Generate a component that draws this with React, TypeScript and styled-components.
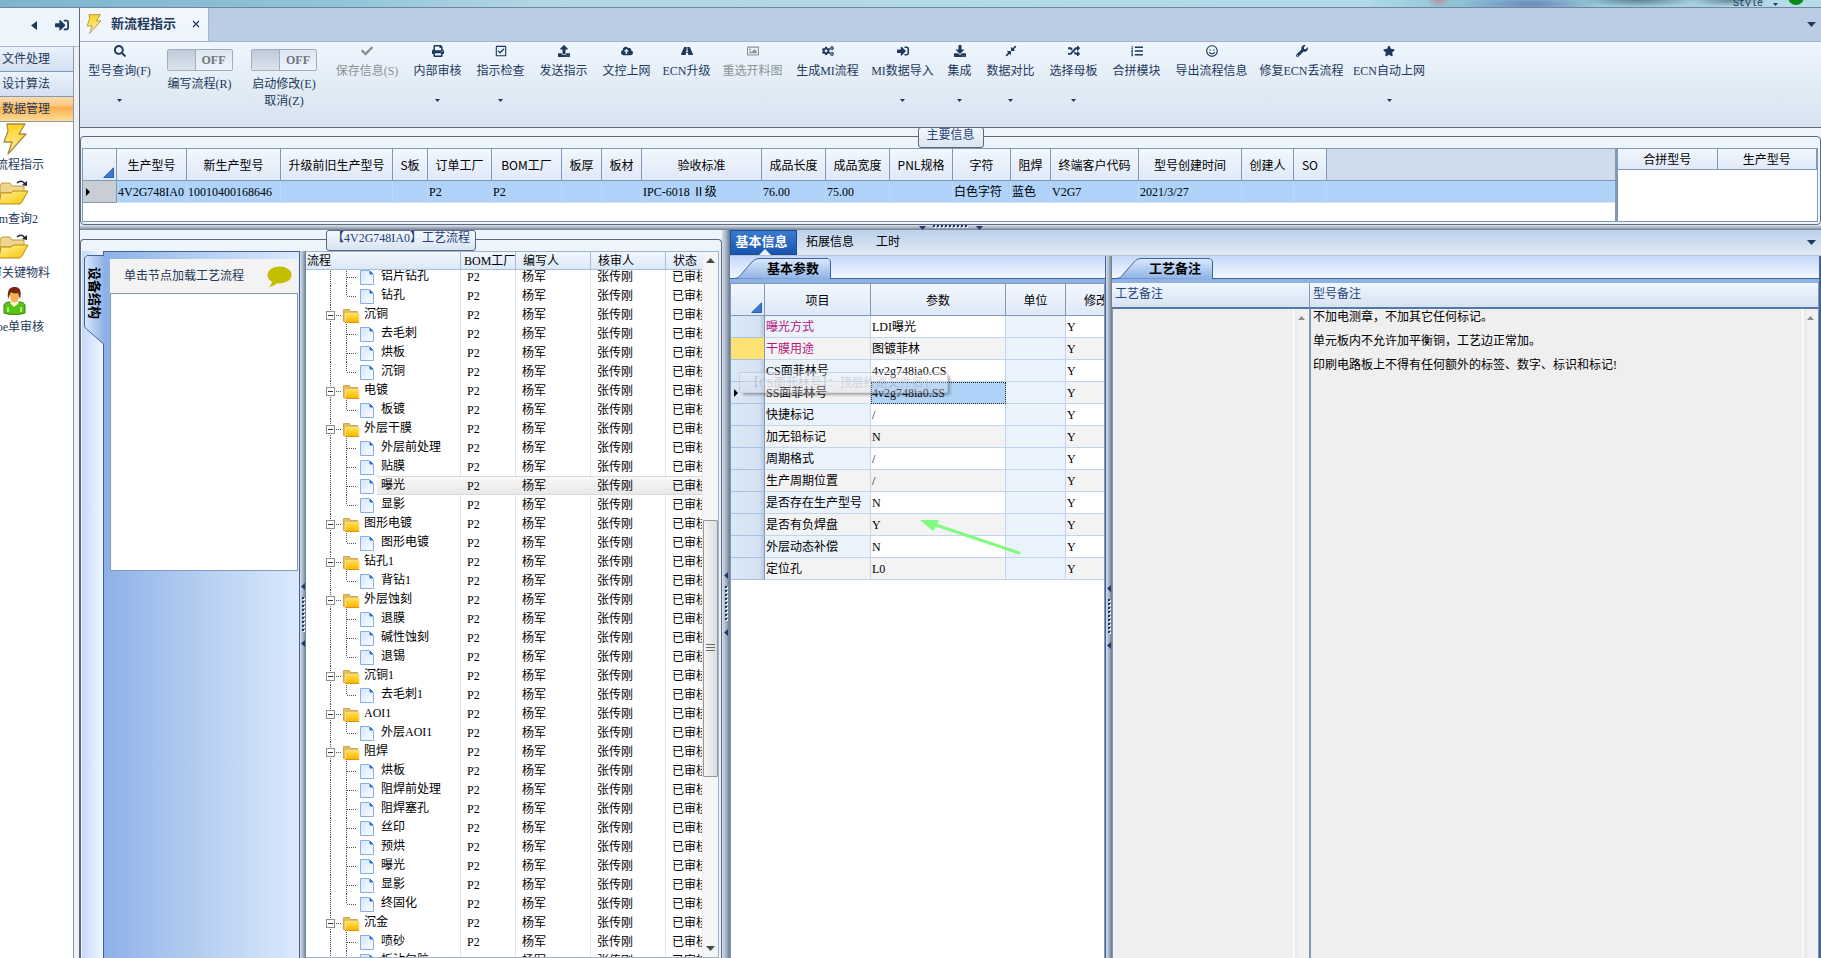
import React from "react";
import styled, { createGlobalStyle, css } from "styled-components";
import {
  FaSearch,
  FaCheck,
  FaPrint,
  FaRegCheckSquare,
  FaUpload,
  FaCloudUploadAlt,
  FaRoad,
  FaRegImage,
  FaCogs,
  FaSignInAlt,
  FaDownload,
  FaCompressAlt,
  FaRandom,
  FaListOl,
  FaRegSmile,
  FaWrench,
  FaStar,
} from "react-icons/fa";

const song = `"Liberation Serif", "Noto Sans CJK SC", serif`;
const hei = `"Noto Sans CJK SC", "Noto Sans", sans-serif`;

const ink = "#1e395b";
const line = "#8099b8";
const frame = "#5a6a80";
const blueLine = "#3f649c";

const GlobalStyle = createGlobalStyle`
  *, *::before, *::after { box-sizing: border-box; }
  body { margin: 0; background: #edf4fc; font: 12px/16px ${song}; color: #000; overflow: hidden; }
  button { font: inherit; color: inherit; border: 0; padding: 0; margin: 0; background: none; cursor: pointer; }
  table { border-collapse: separate; border-spacing: 0; table-layout: fixed; }
  th, td { padding: 0; font-weight: normal; text-align: left; white-space: nowrap; overflow: hidden; }
`;

/* ---------- shell ---------- */

const Shell = styled.div`
  display: flex;
  flex-direction: column;
  height: 100vh;
  overflow: hidden;
`;

const TitleStrip = styled.header`
  flex: none;
  display: flex;
  justify-content: flex-end;
  gap: 10px;
  height: 8px;
  padding-right: 17px;
  overflow: hidden;
  color: ${ink};
  background:
    radial-gradient(ellipse 12px 8px at 79% 0, #c9707e99, transparent),
    radial-gradient(ellipse 70px 9px at 84% 4px, #4d5fa899, transparent),
    radial-gradient(ellipse 60px 7px at 90% 0, #2f4f6699, transparent),
    radial-gradient(ellipse 40px 7px at 95% 0, #2f4f6699, transparent),
    linear-gradient(90deg, #7fb4cf 0, #8fc3d9 18%, #b3d7e4 30%, #b0dbe8 75%, #8dc2d4 80%, #a6d2e0 94%, #b5dbe9 95%);
  border-bottom: 1px solid #6d879e;
`;

const StyleButton = styled.button`
  display: flex;
  align-items: center;
  gap: 10px;
  height: 8px;
  font: 10px/8px "Liberation Mono", monospace;
`;

const GreenDot = styled.span`
  width: 16px;
  height: 16px;
  margin-top: -11px;
  border-radius: 50%;
  background: #0b8a1c;
`;

const Workspace = styled.div`
  flex: 1;
  display: flex;
  min-height: 0;
`;

/* ---------- sidebar ---------- */

const Sidebar = styled.aside`
  flex: none;
  width: 79px;
  display: flex;
  flex-direction: column;
  overflow: hidden;
  background: #f0f0f0;
`;

const SidebarHead = styled.div`
  height: 39px;
  flex: none;
  display: flex;
  align-items: center;
  justify-content: flex-end;
  gap: 18px;
  padding: 0 10px 4px 0;
  color: ${ink};
  background: #edf4fc;
  border-bottom: 1px solid #a9b8cc;
  button { display: flex; }
`;

const NavList = styled.nav`
  flex: 1;
  width: 74px;
  background: #fff;
  border-right: 1px solid #8b9bb0;
`;

const NavButton = styled.button<{ $active?: boolean }>`
  display: block;
  width: 100%;
  height: 25px;
  padding-left: 2px;
  text-align: left;
  color: ${ink};
  border-bottom: 1px solid ${line};
  background: ${(p) =>
    p.$active
      ? "linear-gradient(180deg, #fcdcaa 0, #fbc67c 38%, #faae4d 42%, #fedd93 100%)"
      : "linear-gradient(180deg, #eaf2fc, #d3e0f0)"};
`;

const NavItem = styled.button<{ $end: number }>`
  display: flex;
  flex-direction: column;
  height: 54px;
  width: ${(p) => p.$end}px;
  align-items: flex-end;
  color: ${ink};
  white-space: nowrap;
`;

const NavIcon = styled.span`
  display: flex;
  align-items: center;
  width: 100%;
  height: 33px;
`;

const NavLabel = styled.span`
  line-height: 20px;
`;

/* ---------- document area ---------- */

const Main = styled.main`
  flex: 1;
  min-width: 0;
  display: flex;
  flex-direction: column;
  border-left: 1px solid ${frame};
  background: #edf4fc;
`;

const TabBar = styled.div`
  flex: none;
  display: flex;
  justify-content: space-between;
  height: 33px;
  padding-right: 5px;
  background: linear-gradient(180deg, #bccbe5, #bbcde6);
`;

const DocTab = styled.div`
  display: flex;
  align-items: center;
  width: 129px;
  padding: 0 8px 2px 6px;
  color: ${ink};
  background: linear-gradient(180deg, #f4f8fd, #edf4fc);
  border-right: 1px solid #a3b3cb;
  strong { flex: 1; font-size: 13px; margin-left: 9px; }
`;

const IconButton = styled.button`
  display: flex;
  align-items: center;
  color: ${ink};
`;

const Ribbon = styled.div`
  flex: none;
  display: flex;
  height: 87px;
  color: ${ink};
  background: linear-gradient(180deg, #eff6fe, #d6e3ef);
  border-top: 1px solid #a3b3cb;
  border-bottom: 1px solid ${frame};
`;

const RibbonButton = styled.button<{ $w: number }>`
  flex: none;
  display: flex;
  flex-direction: column;
  align-items: center;
  justify-content: flex-start;
  width: ${(p) => p.$w}px;
  padding-top: 3px;
  white-space: nowrap;
  &:disabled { color: #8d9297; }
  > svg { margin-bottom: 6px; }
`;

const RibbonCaret = styled.span`
  display: flex;
  margin-top: 20px;
`;

const SwitchItem = styled.label<{ $w: number }>`
  flex: none;
  display: flex;
  flex-direction: column;
  align-items: center;
  width: ${(p) => p.$w}px;
  padding-top: 7px;
  line-height: 17px;
`;

const SwitchBox = styled.span`
  display: flex;
  align-items: center;
  width: 66px;
  height: 22px;
  margin-bottom: 5px;
  border: 1px solid #a3afbf;
  border-radius: 2px;
  background: linear-gradient(180deg, #dde5ef, #eef4fb);
  font: bold 12px/20px "Liberation Serif", serif;
  color: #70777f;
  input {
    appearance: none;
    width: 28px;
    height: 20px;
    margin: 0 6px 0 0;
    border-right: 1px solid #a3afbf;
    background: linear-gradient(180deg, #c0cbda, #dbe3ed);
  }
`;

/* ---------- framed groups ---------- */

const Group = styled.section<{ $open?: boolean }>`
  position: relative;
  flex: 1;
  display: flex;
  min-width: 0;
  min-height: 0;
  padding: 11px 2px ${(p) => (p.$open ? 0 : 2)}px 1px;
  border: 1px solid ${frame};
  border-radius: 4px;
  ${(p) => p.$open && css`border-bottom: 0; border-radius: 4px 4px 0 0;`}
`;

const GroupTitle = styled.h2<{ $w: number }>`
  position: absolute;
  top: -10px;
  left: 50%;
  width: ${(p) => p.$w}px;
  margin: 0 0 0 ${(p) => -p.$w / 2}px;
  height: 21px;
  font: 12px/14px ${song};
  text-align: center;
  color: #26427c;
  border: 1px solid ${frame};
  border-radius: 3px;
  background: linear-gradient(180deg, #f3f8fe, #d9e4f0);
`;

const InfoArea = styled.div`
  flex: none;
  display: flex;
  height: 97px;
  padding-top: 8px;
`;

const GridBox = styled.div<{ $w?: number }>`
  ${(p) => (p.$w ? `flex: none; width: ${p.$w}px;` : "flex: 1; min-width: 0;")}
  overflow: hidden;
  background: #fff;
  border: 1px solid ${line};
  & + & { border-left: 2px solid ${line}; }
  table { width: 100%; }
`;

const HeadCell = styled.th<{ $h: number; $filler?: boolean; $pad?: number }>`
  height: ${(p) => p.$h}px;
  font-family: ${hei};
  text-align: ${(p) => (p.$pad ? "left" : "center")};
  padding-left: ${(p) => p.$pad || 0}px;
  border-right: 1px solid ${line};
  border-bottom: 1px solid ${line};
  background: ${(p) => (p.$filler ? "#cfdcee" : "linear-gradient(180deg, #f2f7fe, #dfe9f7)")};
  ${(p) => p.$filler && css`border-right: 0;`}
`;

const CornerCell = styled(HeadCell)`
  vertical-align: bottom;
  text-align: right;
  svg { display: block; margin: 0 2px 2px auto; }
`;

const InfoCell = styled.td`
  height: 22px;
  padding-left: 1px;
  background: #aed2f8;
  border-right: 1px solid #bdd9f8;
  border-bottom: 1px solid #d5e6fa;
`;

const InfoMark = styled.td`
  height: 22px;
  padding-left: 3px;
  background: #c9ced5;
  border-right: 1px solid ${line};
  border-bottom: 1px solid ${line};
`;

/* ---------- splitters ---------- */

const HSplitter = styled.div`
  flex: none;
  display: flex;
  justify-content: center;
  height: 5px;
  background: linear-gradient(180deg, #dfe5ec, #a9b3c1 50%, #6f7f93);
`;

const VSplitter = styled.div<{ $w: number }>`
  flex: none;
  display: flex;
  align-items: center;
  justify-content: center;
  padding-top: 20px;
  width: ${(p) => p.$w}px;
  background: linear-gradient(90deg, #d6dee9, #a9b4c4 50%, #66788f);
`;

/* ---------- lower area ---------- */

const Lower = styled.div`
  flex: 1;
  display: flex;
  min-height: 0;
`;

const LeftArea = styled.div`
  flex: none;
  display: flex;
  width: 642px;
  padding-top: 9px;
`;

const SideTabs = styled.div`
  flex: none;
  width: 21px;
  padding: 4px 0 0 2px;
  background: linear-gradient(90deg, #c6d9fb, #f0f6ff);
`;

const SideTab = styled.button`
  position: relative;
  display: block;
  width: 20px;
  height: 90px;
  font: bold 13px/18px ${song};
  writing-mode: vertical-rl;
  text-orientation: sideways;
  text-align: left;
  padding-top: 12px;
  svg { position: absolute; left: 0; top: 0; }
  span { position: relative; }
`;

const DevicePane = styled.div`
  flex: 1;
  display: flex;
  flex-direction: column;
  padding: 7px 1px 0 6px;
  border: 1px solid ${blueLine};
  border-bottom: 0;
  background: linear-gradient(90deg, #8db1e7, #a9c6ee 35%, #dbe9fd);
`;

const Hint = styled.div`
  display: flex;
  align-items: center;
  justify-content: space-between;
  height: 34px;
  padding: 0 6px 0 14px;
  color: ${ink};
  background: #f3f3f3;
`;

const DeviceList = styled.div`
  height: 278px;
  background: #fff;
  border: 1px solid #7f9db9;
`;

const DeviceArea = styled.div`
  flex: none;
  display: flex;
  width: 218px;
`;

const TreeBox = styled.div`
  flex: 1;
  display: flex;
  min-width: 0;
  background: #fff;
  border: 1px solid #9db4d0;
  border-left: 0;
`;

const TreeArea = styled.div`
  flex: 1;
  min-width: 0;
  display: flex;
  flex-direction: column;
  overflow: hidden;
  table { width: 100%; flex: none; }
`;

const TreeBody = styled.div`
  flex: 1;
  min-height: 0;
  overflow: hidden;
  table { margin-top: -3px; }
`;

const TreeHead = styled.th<{ $pad: number }>`
  height: 18px;
  padding-left: ${(p) => p.$pad}px;
  background: linear-gradient(180deg, #f2f7fe, #dce8f7);
  border-right: 1px solid #a9bdd8;
  border-bottom: 1px solid #a9bdd8;
  &:last-child { border-right: 0; }
`;

const TreeRow = styled.tr<{ $sel?: boolean }>`
  td {
    height: 19px;
    padding-left: 6px;
    border-right: 1px solid #dfe4ea;
    ${(p) =>
      p.$sel &&
      css`
        border-right: 0;
        background: linear-gradient(180deg, #f8f8f8, #e8e8e8);
        border-top: 1px solid #dadada;
        border-bottom: 1px solid #dadada;
      `}
  }
  td:first-child { padding-left: 0; background: #fff; border-top: 0; border-bottom: 0; }
  td:last-child { border-right: 0; text-overflow: clip; }
`;

const TreeLabel = styled.div<{ $sel?: boolean }>`
  display: flex;
  align-items: center;
  height: 19px;
  svg { flex: none; }
  span {
    flex: 1;
    height: 19px;
    line-height: 19px;
    padding-left: 4px;
    ${(p) =>
      p.$sel &&
      css`
        line-height: 17px;
        background: linear-gradient(180deg, #f8f8f8, #e8e8e8);
        border-top: 1px solid #dadada;
        border-bottom: 1px solid #dadada;
      `}
  }
`;

const ScrollTrack = styled.div`
  flex: none;
  display: flex;
  flex-direction: column;
  width: 16px;
  background: #f5f5f5;
  border-left: 1px solid #ececec;
`;

const ScrollArrow = styled.button`
  display: flex;
  align-items: center;
  justify-content: center;
  height: 17px;
  color: #4c4c4c;
`;

const ScrollGap = styled.span<{ $n: number }>`
  flex: ${(p) => p.$n};
`;

const ScrollThumb = styled.div<{ $n: number }>`
  flex: ${(p) => p.$n};
  display: flex;
  align-items: center;
  justify-content: center;
  border: 1px solid #979797;
  border-radius: 1px;
  background: linear-gradient(90deg, #f5f5f7, #dcdde1);
`;

/* ---------- right area ---------- */

const RightArea = styled.div`
  flex: 1;
  min-width: 0;
  display: flex;
  flex-direction: column;
`;

const PageTabs = styled.div`
  flex: none;
  display: flex;
  height: 26px;
  padding-right: 5px;
  background: linear-gradient(180deg, #bdd0e9, #dfe9f5);
  border-bottom: 1px solid #b5c3d6;
`;

const PageTab = styled.button<{ $active?: boolean; $w: number }>`
  position: relative;
  height: 25px;
  width: ${(p) => p.$w}px;
  padding-bottom: 2px;
  ${(p) =>
    p.$active &&
    css`
      padding-right: 4px;
      font-weight: bold;
      font-size: 13px;
      color: #fff;
      border: 1px solid #1a4c97;
      background: linear-gradient(180deg, #3a7bd0, #1a56b0);
    `}
  svg { position: absolute; left: 28px; bottom: -1px; }
`;

const Spacer = styled.span`
  flex: 1;
`;

const Panes = styled.div`
  flex: 1;
  display: flex;
  min-height: 0;
`;

const ParamPane = styled.div`
  flex: none;
  display: flex;
  flex-direction: column;
  width: 376px;
  border-right: 1px solid ${blueLine};
`;

const NotePane = styled.div`
  flex: 1;
  min-width: 0;
  display: flex;
  flex-direction: column;
  border-right: 2px solid ${blueLine};
`;

const PaneTabs = styled.div`
  flex: none;
  display: flex;
  height: 27px;
  padding: 2px 0 0 4px;
  background: linear-gradient(180deg, #c6d9fa, #f2f7ff 22px);
`;

const PaneTab = styled.button`
  position: relative;
  width: 97px;
  height: 21px;
  padding-left: 21px;
  font: bold 13px/19px ${song};
  svg { position: absolute; left: 0; top: 0; }
  span { position: relative; }
`;

const PaneRule = styled.div`
  flex: none;
  height: 5px;
  margin-top: -5px;
  border-top: 1px solid ${blueLine};
  background: #8fb2e4;
`;

const ParamBox = styled.div`
  position: relative;
  flex: 1;
  min-height: 0;
  overflow: hidden;
  background: #fff;
  border: 1px solid ${line};
  border-bottom: 0;
  table { width: 408px; }
`;

const ParamMark = styled.td<{ $hot?: boolean }>`
  height: 22px;
  padding-left: 3px;
  background: ${(p) => (p.$hot ? "#fee173" : "linear-gradient(90deg, #dbe8f6, #d3e1f2 85%, #b9cae3)")};
  border-right: 1px solid ${line};
  border-bottom: 1px solid #a9c0de;
`;

const ParamCell = styled.td<{ $tone?: "blue" | "alt" | "plain" | "sel"; $pink?: boolean }>`
  height: 22px;
  padding-left: 1px;
  color: ${(p) => (p.$pink ? "#b5157f" : "#000")};
  border-right: 1px solid #c3d4ee;
  border-bottom: 1px solid #c3d4ee;
  background: ${(p) =>
    ({ blue: "#eaf2fc", alt: "#f3f3f3", plain: "#fff", sel: "#aed2f8" })[p.$tone || "plain"]};
  ${(p) => p.$tone === "sel" && css`outline: 1px dotted #222; outline-offset: -1px;`}
`;

const FadingTip = styled.div`
  position: absolute;
  left: 8px;
  top: 88px;
  width: 209px;
  height: 21px;
  padding-left: 7px;
  line-height: 20px;
  color: rgba(110, 110, 120, 0.25);
  border: 1px solid rgba(140, 140, 150, 0.25);
  border-radius: 2px;
  background: linear-gradient(180deg, rgba(255, 255, 255, 0.25), rgba(215, 218, 228, 0.35));
  box-shadow: 3px 3px 3px -1px rgba(70, 70, 80, 0.45);
`;

const Pointer = styled.svg`
  position: absolute;
  left: 188px;
  top: 235px;
`;

const NoteColumns = styled.div`
  flex: 1;
  display: flex;
  min-height: 0;
`;

const NoteColumn = styled.div<{ $w?: number }>`
  ${(p) => (p.$w ? `flex: none; width: ${p.$w}px;` : "flex: 1; min-width: 0;")}
  display: flex;
  flex-direction: column;
  border-right: 1px solid ${line};
  label {
    flex: none;
    height: 26px;
    padding-left: 3px;
    line-height: 23px;
    color: #26427c;
    background: linear-gradient(180deg, #f0f7ff, #d6e3f0);
    border-bottom: 2px solid #5577a8;
  }
`;

const NoteBody = styled.div`
  flex: 1;
  min-height: 0;
  display: flex;
  overflow: hidden;
  background: #efefef;
  border-left: 1px solid ${line};
  textarea {
    flex: 1;
    min-width: 0;
    margin-top: -4px;
    padding: 0 0 0 2px;
    border: 0;
    outline: 0;
    resize: none;
    overflow: hidden;
    background: none;
    color: #000;
    font: 12px/24px ${song};
  }
`;

const NoteScroll = styled.div`
  flex: none;
  width: 16px;
  background: linear-gradient(90deg, #fff 1px, #e9e9e9 2px, #f1f1f1 6px);
  button { width: 100%; color: #8c8c8c; }
`;

/* ---------- drawings ---------- */

const Bolt = ({ w, h }: { w: number; h: number }) => (
  <svg width={w} height={h} viewBox="0 0 24 32" aria-hidden="true">
    <defs>
      <linearGradient id="bolt" x1="0" y1="0" x2="0" y2="1">
        <stop offset="0" stopColor="#ffd21e" />
        <stop offset="1" stopColor="#fff0a8" />
      </linearGradient>
    </defs>
    <path d="M4 1h18l-6 10h7L5 31l4-12H1L5 8z" fill="url(#bolt)" stroke="#a98a3c" strokeWidth="1.3" strokeLinejoin="round" />
  </svg>
);

const OpenFolder = () => (
  <svg width="30" height="26" viewBox="0 0 30 26" aria-hidden="true">
    <defs>
      <linearGradient id="openFolder" x1="0" y1="0" x2="1" y2="1">
        <stop offset="0" stopColor="#fff39a" />
        <stop offset="1" stopColor="#f5c400" />
      </linearGradient>
    </defs>
    <path d="M0 5l2-2h8l2 3h12v7H0z" fill="#f1d48e" stroke="#c29a3a" />
    <path d="M-1 24L1 13h10l2-2h15l-6 11-2 2z" fill="url(#openFolder)" stroke="#b88d10" />
    <path d="M17 3c3-3 6-2 8 1" fill="none" stroke="#24263a" strokeWidth="1.4" />
    <path d="M22 5l5 1V1z" fill="#24263a" />
  </svg>
);

const Person = () => (
  <svg width="26" height="30" viewBox="0 0 26 30" aria-hidden="true">
    <path d="M4 27V20c0-3 3-4 6-4h9c3 0 6 1 6 4v7c-5 2-16 2-21 0z" fill="#55c414" stroke="#3a7d12" />
    <path d="M8 26v-5M21 26v-5" stroke="#c8f59a" strokeWidth="1.5" />
    <path d="M10 17l4 4 5-4-2-3h-5z" fill="#fff3d6" />
    <ellipse cx="14.500" cy="10" rx="4.500" ry="6.500" fill="#f2b14c" />
    <path d="M8 13C7 3 10 1 15 1s7 4 5 12l-2-6c-3 1-6 0-7-1z" fill="#7a2412" />
  </svg>
);

const Bubble = () => (
  <svg width="25" height="21" viewBox="0 0 25 21" aria-hidden="true">
    <ellipse cx="12.500" cy="9" rx="12" ry="8.500" fill="#c3be00" />
    <path d="M5 14c0 3-1 5-3 7 4-1 7-2 9-5z" fill="#c3be00" />
  </svg>
);

const Caret = ({ w = 5, h = 3, up }: { w?: number; h?: number; up?: boolean }) => (
  <svg width={w} height={h} viewBox="0 0 10 6" preserveAspectRatio="none" aria-hidden="true">
    <path d={up ? "M0 6h10L5 0z" : "M0 0h10L5 6z"} fill="currentColor" />
  </svg>
);

const CornerMark = () => (
  <svg width="11" height="11" viewBox="0 0 11 11" aria-hidden="true">
    <path d="M11 0v11H0z" fill="#3c78d8" />
    <path d="M10.500 1v9.500H1z" fill="none" stroke="#2b5fb5" />
  </svg>
);

const RowMark = () => (
  <svg width="4" height="8" viewBox="0 0 4 8" aria-hidden="true">
    <path d="M0 0l4 4-4 4z" fill="#000" />
  </svg>
);

const dots = [0, 1, 2, 3, 4, 5, 6, 7, 8];

const GripV = () => (
  <svg width="5" height="66" viewBox="0 0 5 66" aria-hidden="true">
    <path d="M4 1v7L0 4.500zM4 58v7l-4-3.500z" fill="#24386e" />
    {dots.map((i) => (
      <g key={i}>
        <rect x="2" y={16 + i * 4} width="2" height="2" fill="#fff" />
        <rect x="1" y={15 + i * 4} width="2" height="2" fill="#24386e" />
      </g>
    ))}
  </svg>
);

const GripH = () => (
  <svg width="66" height="5" viewBox="0 0 66 5" aria-hidden="true">
    <path d="M1 1h7L4.500 5zM58 1h7l-3.500 4z" fill="#24386e" />
    {dots.map((i) => (
      <g key={i}>
        <rect x={16 + i * 4} y="1" width="2" height="2" fill="#fff" />
        <rect x={15 + i * 4} y="0" width="2" height="2" fill="#24386e" />
      </g>
    ))}
  </svg>
);

const TabShape = () => (
  <svg width="97" height="21" viewBox="0 0 97 21" aria-hidden="true">
    <defs>
      <linearGradient id="paneTab" x1="0" y1="0" x2="0" y2="1">
        <stop offset="0" stopColor="#dbe9fd" />
        <stop offset="1" stopColor="#8fb2e4" />
      </linearGradient>
    </defs>
    <path d="M0 20.500c4 0 5-2 7-4L18 4c2-2 4-3.500 7-3.500h69l2.500 2.500v18z" fill="url(#paneTab)" />
    <path d="M0 20.500c4 0 5-2 7-4L18 4c2-2 4-3.500 7-3.500h69l2.500 2.500v18" fill="none" stroke={blueLine} />
  </svg>
);

const SideTabShape = () => (
  <svg width="20" height="90" viewBox="0 0 20 90" aria-hidden="true">
    <defs>
      <linearGradient id="sideTab" x1="0" y1="0" x2="1" y2="0">
        <stop offset="0" stopColor="#dbe9fd" />
        <stop offset="1" stopColor="#8fb2e4" />
      </linearGradient>
    </defs>
    <path d="M20 .5H3L.5 3v67c0 2 1 3 2 4L20 89.500z" fill="url(#sideTab)" />
    <path d="M20 .5H3L.5 3v67c0 2 1 3 2 4L20 89.500" fill="none" stroke={blueLine} />
  </svg>
);

const FolderNode = () => (
  <svg width="54" height="19" viewBox="0 0 54 19" aria-hidden="true">
    <defs>
      <linearGradient id="folder" x1="0" y1="0" x2="0" y2="1">
        <stop offset="0" stopColor="#ffe14a" />
        <stop offset="1" stopColor="#fbb400" />
      </linearGradient>
    </defs>
    <path d="M24.500 0v19M30 10.500h6" stroke="#555" strokeDasharray="1 1" />
    <rect x="20.500" y="6.500" width="8" height="8" fill="#fff" stroke="#8f8f8f" />
    <path d="M22 10.500h5" stroke="#333" />
    <path d="M37.500 16.500V4.500h6l1 2h7v10z" fill="#e3bd5c" stroke="#cfa650" />
    <path d="M39.500 17.500v-9h13.500v9z" fill="url(#folder)" stroke="#f6e08a" />
    <path d="M39 17.500h14" stroke="#d9930f" />
  </svg>
);

const DocNode = ({ last }: { last: boolean }) => (
  <svg width="71" height="19" viewBox="0 0 71 19" aria-hidden="true">
    <defs>
      <linearGradient id="doc" x1="0" y1="0" x2="1" y2="1">
        <stop offset="0" stopColor="#d3e6ff" />
        <stop offset="1" stopColor="#fbfdff" />
      </linearGradient>
    </defs>
    <path d={`M24.500 0v19M40.500 0v${last ? 10 : 19}M41 10.500h9`} stroke="#555" strokeDasharray="1 1" />
    <path d="M54.500 3.500h9l4 4v10h-13z" fill="url(#doc)" stroke="#86afe6" />
    <path d="M64 4v3h3z" fill="#2f6fd0" stroke="#2f6fd0" />
  </svg>
);

/* ---------- data ---------- */

type Tool = { icon: React.ComponentType<{ size?: number }>; text: string; w: number; menu?: boolean; off?: boolean };

const tools: Tool[] = [
  { icon: FaCheck, text: "保存信息(S)", w: 78, off: true },
  { icon: FaPrint, text: "内部审核", w: 63, menu: true },
  { icon: FaRegCheckSquare, text: "指示检查", w: 63, menu: true },
  { icon: FaUpload, text: "发送指示", w: 63 },
  { icon: FaCloudUploadAlt, text: "文控上网", w: 63 },
  { icon: FaRoad, text: "ECN升级", w: 57 },
  { icon: FaRegImage, text: "重选开料图", w: 75, off: true },
  { icon: FaCogs, text: "生成MI流程", w: 75 },
  { icon: FaSignInAlt, text: "MI数据导入", w: 75, menu: true },
  { icon: FaDownload, text: "集成", w: 39, menu: true },
  { icon: FaCompressAlt, text: "数据对比", w: 63, menu: true },
  { icon: FaRandom, text: "选择母板", w: 63, menu: true },
  { icon: FaListOl, text: "合拼模块", w: 63 },
  { icon: FaRegSmile, text: "导出流程信息", w: 87 },
  { icon: FaWrench, text: "修复ECN丢流程", w: 93 },
  { icon: FaStar, text: "ECN自动上网", w: 82, menu: true },
];

const infoColumns: [string, number, string][] = [
  ["生产型号", 70, "4V2G748IA0"],
  ["新生产型号", 94, "10010400168646"],
  ["升级前旧生产型号", 112, ""],
  ["S板", 35, ""],
  ["订单工厂", 64, "P2"],
  ["BOM工厂", 70, "P2"],
  ["板厚", 40, ""],
  ["板材", 40, ""],
  ["验收标准", 120, "IPC-6018 Ⅱ级"],
  ["成品长度", 64, "76.00"],
  ["成品宽度", 64, "75.00"],
  ["PNL规格", 63, ""],
  ["字符", 58, "白色字符"],
  ["阻焊", 40, "蓝色"],
  ["终端客户代码", 88, "V2G7"],
  ["型号创建时间", 103, "2021/3/27"],
  ["创建人", 52, ""],
  ["SO", 33, ""],
];

const tree: [string, string[]][] = [
  ["", ["铝片钻孔", "钻孔"]],
  ["沉铜", ["去毛刺", "烘板", "沉铜"]],
  ["电镀", ["板镀"]],
  ["外层干膜", ["外层前处理", "贴膜", "曝光", "显影"]],
  ["图形电镀", ["图形电镀"]],
  ["钻孔1", ["背钻1"]],
  ["外层蚀刻", ["退膜", "碱性蚀刻", "退锡"]],
  ["沉铜1", ["去毛刺1"]],
  ["AOI1", ["外层AOI1"]],
  ["阻焊", ["烘板", "阻焊前处理", "阻焊塞孔", "丝印", "预烘", "曝光", "显影", "终固化"]],
  ["沉金", ["喷砂", "板沾包胶"]],
];

const selectedStep = "外层干膜/曝光";

const params: [string, string][] = [
  ["曝光方式", "LDI曝光"],
  ["干膜用途", "图镀菲林"],
  ["CS面菲林号", "4v2g748ia0.CS"],
  ["SS面菲林号", "4v2g748ia0.SS"],
  ["快捷标记", "/"],
  ["加无铅标记", "N"],
  ["周期格式", "/"],
  ["生产周期位置", "/"],
  ["是否存在生产型号", "N"],
  ["是否有负焊盘", "Y"],
  ["外层动态补偿", "N"],
  ["定位孔", "L0"],
];

const modelNote = "不加电测章，不加其它任何标记。\n单元板内不允许加平衡铜，工艺边正常加。\n印刷电路板上不得有任何额外的标签、数字、标识和标记!";

const TreeCols = () => (
  <colgroup>
    <col style={{ width: 155 }} />
    <col style={{ width: 55 }} />
    <col style={{ width: 75 }} />
    <col style={{ width: 75 }} />
    <col />
  </colgroup>
);

const StepRow = ({ name, node, sel }: { name: string; node: React.ReactNode; sel?: boolean }) => (
  <TreeRow $sel={sel}>
    <td>
      <TreeLabel $sel={sel}>
        {node}
        <span>{name}</span>
      </TreeLabel>
    </td>
    <td>P2</td>
    <td>杨军</td>
    <td>张传刚</td>
    <td>已审核</td>
  </TreeRow>
);

export default function App() {
  return (
    <Shell>
      <GlobalStyle />
      <TitleStrip>
        <StyleButton>
          Style
          <Caret />
        </StyleButton>
        <GreenDot />
      </TitleStrip>
      <Workspace>
        <Sidebar>
          <SidebarHead>
            <button aria-label="收起">
              <svg width="6" height="9" viewBox="0 0 6 9">
                <path d="M6 0v9L0 4.500z" fill="currentColor" />
              </svg>
            </button>
            <button aria-label="停靠">
              <FaSignInAlt size={14} />
            </button>
          </SidebarHead>
          <NavList>
            <NavButton>文件处理</NavButton>
            <NavButton>设计算法</NavButton>
            <NavButton $active>数据管理</NavButton>
            <NavItem $end={44}>
              <NavIcon><Bolt w={30} h={32} /></NavIcon>
              <NavLabel>新流程指示</NavLabel>
            </NavItem>
            <NavItem $end={38}>
              <NavIcon><OpenFolder /></NavIcon>
              <NavLabel>Bom查询2</NavLabel>
            </NavItem>
            <NavItem $end={50}>
              <NavIcon><OpenFolder /></NavIcon>
              <NavLabel>审关键物料</NavLabel>
            </NavItem>
            <NavItem $end={44}>
              <NavIcon><Person /></NavIcon>
              <NavLabel>oe单审核</NavLabel>
            </NavItem>
          </NavList>
        </Sidebar>

        <Main>
          <TabBar>
            <DocTab>
              <Bolt w={16} h={20} />
              <strong>新流程指示</strong>
              <IconButton aria-label="关闭">
                <svg width="8" height="8" viewBox="0 0 8 8">
                  <path d="M1 1l6 6M7 1L1 7" stroke="currentColor" strokeWidth="1.200" />
                </svg>
              </IconButton>
            </DocTab>
            <IconButton aria-label="标签列表">
              <Caret w={9} h={5} />
            </IconButton>
          </TabBar>

          <Ribbon>
            <RibbonButton $w={79}>
              <FaSearch size={12} />
              型号查询(F)
              <RibbonCaret><Caret /></RibbonCaret>
            </RibbonButton>
            <SwitchItem $w={81}>
              <SwitchBox><input type="checkbox" />OFF</SwitchBox>
              编写流程(R)
            </SwitchItem>
            <SwitchItem $w={88}>
              <SwitchBox><input type="checkbox" />OFF</SwitchBox>
              启动修改(E)
              <span>取消(Z)</span>
            </SwitchItem>
            {tools.map(({ icon: Icon, text, w, menu, off }) => (
              <RibbonButton key={text} $w={w} disabled={off}>
                <Icon size={12} />
                {text}
                {menu && <RibbonCaret><Caret /></RibbonCaret>}
              </RibbonButton>
            ))}
          </Ribbon>

          <InfoArea>
            <Group>
              <GroupTitle $w={66}>主要信息</GroupTitle>
              <GridBox>
                <table>
                  <colgroup>
                    <col style={{ width: 34 }} />
                    {infoColumns.map(([name, w]) => (
                      <col key={name} style={{ width: w }} />
                    ))}
                    <col />
                  </colgroup>
                  <thead>
                    <tr>
                      <CornerCell $h={32}><CornerMark /></CornerCell>
                      {infoColumns.map(([name]) => (
                        <HeadCell key={name} $h={32}>{name}</HeadCell>
                      ))}
                      <HeadCell $h={32} $filler />
                    </tr>
                  </thead>
                  <tbody>
                    <tr>
                      <InfoMark><RowMark /></InfoMark>
                      {infoColumns.map(([name, , value]) => (
                        <InfoCell key={name}>{value}</InfoCell>
                      ))}
                      <InfoCell />
                    </tr>
                  </tbody>
                </table>
              </GridBox>
              <GridBox $w={202}>
                <table>
                  <thead>
                    <tr>
                      <HeadCell $h={21}>合拼型号</HeadCell>
                      <HeadCell $h={21}>生产型号</HeadCell>
                    </tr>
                  </thead>
                </table>
              </GridBox>
            </Group>
          </InfoArea>

          <HSplitter><GripH /></HSplitter>

          <Lower>
            <LeftArea>
              <Group $open>
                <GroupTitle $w={150}>【4V2G748IA0】工艺流程</GroupTitle>
                <DeviceArea>
                  <SideTabs>
                    <SideTab>
                      <SideTabShape />
                      <span>设备结构</span>
                    </SideTab>
                  </SideTabs>
                  <DevicePane>
                    <Hint>
                      单击节点加载工艺流程
                      <Bubble />
                    </Hint>
                    <DeviceList />
                  </DevicePane>
                </DeviceArea>
                <VSplitter $w={6}><GripV /></VSplitter>
                <TreeBox>
                  <TreeArea>
                    <table>
                      <TreeCols />
                      <thead>
                        <tr>
                          <TreeHead $pad={1}>流程</TreeHead>
                          <TreeHead $pad={3}>BOM工厂</TreeHead>
                          <TreeHead $pad={7}>编写人</TreeHead>
                          <TreeHead $pad={7}>核审人</TreeHead>
                          <TreeHead $pad={7}>状态</TreeHead>
                        </tr>
                      </thead>
                    </table>
                    <TreeBody>
                      <table>
                        <TreeCols />
                        <tbody>
                          {tree.map(([folder, steps]) => (
                            <React.Fragment key={folder}>
                              {folder && <StepRow name={folder} node={<FolderNode />} />}
                              {steps.map((step, i) => (
                                <StepRow
                                  key={step}
                                  name={step}
                                  sel={`${folder}/${step}` === selectedStep}
                                  node={<DocNode last={i === steps.length - 1 && folder !== "沉金"} />}
                                />
                              ))}
                            </React.Fragment>
                          ))}
                        </tbody>
                      </table>
                    </TreeBody>
                  </TreeArea>
                  <ScrollTrack>
                    <ScrollArrow aria-label="向上滚动"><Caret up w={9} h={5} /></ScrollArrow>
                    <ScrollGap $n={251} />
                    <ScrollThumb $n={256}>
                      <svg width="9" height="8" viewBox="0 0 9 8" aria-hidden="true">
                        <path d="M0 .5h9M0 3.500h9M0 6.500h9" stroke="#6b6b6b" />
                      </svg>
                    </ScrollThumb>
                    <ScrollGap $n={163} />
                    <ScrollArrow aria-label="向下滚动"><Caret w={9} h={5} /></ScrollArrow>
                  </ScrollTrack>
                </TreeBox>
              </Group>
            </LeftArea>

            <VSplitter $w={8}><GripV /></VSplitter>

            <RightArea>
              <PageTabs>
                <PageTab $active $w={67}>
                  基本信息
                  <svg width="12" height="6" viewBox="0 0 12 6" aria-hidden="true">
                    <path d="M0 6l6-6 6 6z" fill="#eef4fd" />
                  </svg>
                </PageTab>
                <PageTab $w={66}>拓展信息</PageTab>
                <PageTab $w={50}>工时</PageTab>
                <Spacer />
                <IconButton aria-label="页面列表"><Caret w={9} h={5} /></IconButton>
              </PageTabs>
              <Panes>
                <ParamPane>
                  <PaneTabs>
                    <PaneTab>
                      <TabShape />
                      <span>基本参数</span>
                    </PaneTab>
                  </PaneTabs>
                  <PaneRule />
                  <ParamBox>
                    <table>
                      <colgroup>
                        <col style={{ width: 34 }} />
                        <col style={{ width: 106 }} />
                        <col style={{ width: 135 }} />
                        <col style={{ width: 60 }} />
                        <col />
                      </colgroup>
                      <thead>
                        <tr>
                          <CornerCell $h={32}><CornerMark /></CornerCell>
                          <HeadCell $h={32}>项目</HeadCell>
                          <HeadCell $h={32}>参数</HeadCell>
                          <HeadCell $h={32}>单位</HeadCell>
                          <HeadCell $h={32} $pad={18}>修改</HeadCell>
                        </tr>
                      </thead>
                      <tbody>
                        {params.map(([name, value], i) => {
                          const tone = i % 2 ? "alt" : "plain";
                          return (
                            <tr key={name}>
                              <ParamMark $hot={i === 1}>{i === 3 && <RowMark />}</ParamMark>
                              <ParamCell $tone={i % 2 ? "alt" : "blue"} $pink={i < 2}>{name}</ParamCell>
                              <ParamCell $tone={i === 3 ? "sel" : tone}>{value}</ParamCell>
                              <ParamCell $tone="blue" />
                              <ParamCell $tone={tone}>Y</ParamCell>
                            </tr>
                          );
                        })}
                      </tbody>
                    </table>
                    <FadingTip role="tooltip">【CS面菲林号】：顶层线路文件名；</FadingTip>
                    <Pointer width="102" height="36" viewBox="0 0 102 36" aria-hidden="true">
                      <path d="M14 5l86 29" stroke="#80fa80" strokeWidth="3" strokeLinecap="round" />
                      <path d="M1 1l19 0-2 5-4 6z" fill="#80fa80" />
                    </Pointer>
                  </ParamBox>
                </ParamPane>

                <VSplitter $w={6}><GripV /></VSplitter>

                <NotePane>
                  <PaneTabs>
                    <PaneTab>
                      <TabShape />
                      <span>工艺备注</span>
                    </PaneTab>
                  </PaneTabs>
                  <PaneRule />
                  <NoteColumns>
                    <NoteColumn $w={198}>
                      <label htmlFor="craft-note">工艺备注</label>
                      <NoteBody>
                        <textarea id="craft-note" readOnly value="" />
                        <NoteScroll>
                          <ScrollArrow aria-label="向上滚动"><Caret up w={7} h={4} /></ScrollArrow>
                        </NoteScroll>
                      </NoteBody>
                    </NoteColumn>
                    <NoteColumn>
                      <label htmlFor="model-note">型号备注</label>
                      <NoteBody>
                        <textarea id="model-note" readOnly value={modelNote} />
                        <NoteScroll>
                          <ScrollArrow aria-label="向上滚动"><Caret up w={7} h={4} /></ScrollArrow>
                        </NoteScroll>
                      </NoteBody>
                    </NoteColumn>
                  </NoteColumns>
                </NotePane>
              </Panes>
            </RightArea>
          </Lower>
        </Main>
      </Workspace>
    </Shell>
  );
}
